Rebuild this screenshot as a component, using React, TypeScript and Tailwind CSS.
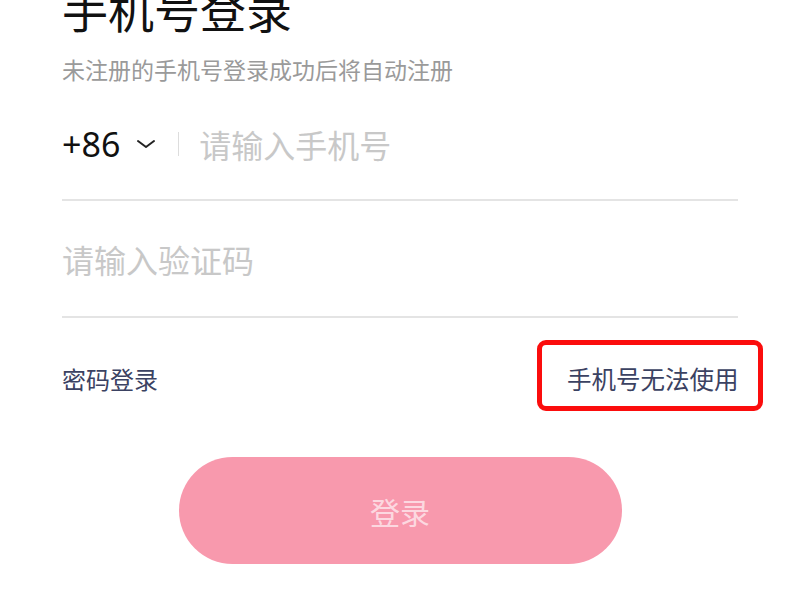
import React from "react";

const font = { fontFamily: '"Noto Sans CJK SC", "Noto Sans", sans-serif' };

export default function App() {
  return (
    <div className="w-[800px] h-[600px] overflow-hidden bg-white" style={font}>
      <div className="px-[62px]">
        <div className="mt-[-15px] text-[46px] leading-[46px] text-[#111111]">手机号登录</div>
        <div className="mt-[27px] text-[23px] leading-[23px] text-[#9a9a9a]">未注册的手机号登录成功后将自动注册</div>

        <div className="mt-[47px] flex items-center h-[32px]">
          <span className="text-[34px] leading-[32px] text-[#111111]" style={{ fontFamily: '"Noto Sans", "Noto Sans CJK SC", sans-serif' }}>+86</span>
          <svg className="ml-[16px]" width="20" height="10" viewBox="0 0 20 10">
            <path d="M2 2 L10 8 L18 2" fill="none" stroke="#222" strokeWidth="2" strokeLinecap="round" strokeLinejoin="round" />
          </svg>
          <div className="ml-[22px] w-px h-[24px] bg-[#dddddd]" />
          <span className="ml-[20px] text-[32px] leading-[32px] text-[#c8c8c8]">请输入手机号</span>
        </div>
        <div className="mt-[39px] h-[2px] bg-[#e4e4e4]" />

        <div className="mt-[42px] h-[32px] flex items-center text-[32px] leading-[32px] text-[#c8c8c8]">请输入验证码</div>
        <div className="mt-[41px] h-[2px] bg-[#e4e4e4]" />

        <div className="mt-[22px] flex items-center justify-between">
          <span className="mt-[7px] text-[24px] leading-[24px] text-[#3b4262]">密码登录</span>
          <div className="mr-[-25px] border-[5px] border-[#fb0d0d] rounded-[9px] pl-[25px] pt-[7px] h-[71px] w-[226px] flex items-center">
            <span className="text-[24.5px] leading-[24px] text-[#3b4262]">手机号无法使用</span>
          </div>
        </div>

        <div className="mt-[46px] flex justify-center">
          <div className="w-[443px] h-[107px] rounded-full bg-[#f899ad] flex items-center justify-center">
            <span className="text-[30px] leading-[30px] text-[#fcd8e0]">登录</span>
          </div>
        </div>
      </div>
    </div>
  );
}
